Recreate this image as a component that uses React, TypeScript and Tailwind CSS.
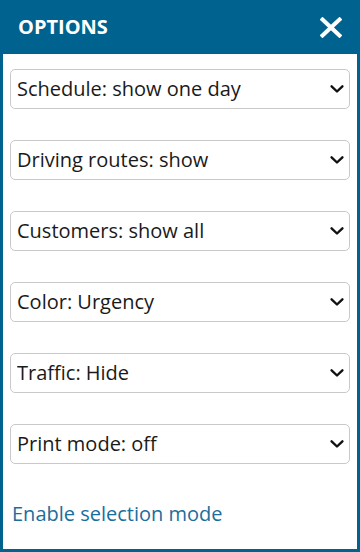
import React, { useState } from "react";

const options: { label: string; choices: string[] }[] = [
    { label: "Schedule", choices: ["show one day", "show one week"] },
    { label: "Driving routes", choices: ["show", "hide"] },
    { label: "Customers", choices: ["show all", "show selected"] },
    { label: "Color", choices: ["Urgency", "Driver"] },
    { label: "Traffic", choices: ["Hide", "Show"] },
    { label: "Print mode", choices: ["off", "on"] },
];

const Chevron: React.FC = () => (
    <svg
        className="pointer-events-none absolute right-[6px] top-1/2 -translate-y-1/2"
        width="14"
        height="9"
        viewBox="0 0 14 9"
        fill="none"
    >
        <path d="M1.6 1.8 L7 7 L12.4 1.8" stroke="#111" strokeWidth="2.4" strokeLinecap="round" strokeLinejoin="round" />
    </svg>
);

const OptionSelect: React.FC<{ label: string; choices: string[] }> = ({ label, choices }) => {
    const [value, setValue] = useState(choices[0]);
    return (
        <div className="relative">
            <select
                value={value}
                onChange={(e) => setValue(e.target.value)}
                className="h-[40px] w-full appearance-none rounded-[5px] border border-[#c9c9c9] bg-white pl-[6px] pr-8 text-[20px] text-[#1a1a1a] outline-none"
            >
                {choices.map((c) => (
                    <option key={c} value={c}>
                        {label}: {c}
                    </option>
                ))}
            </select>
            <Chevron />
        </div>
    );
};

const App: React.FC = () => {
    return (
        <div
            className="flex h-[552px] w-[360px] flex-col bg-[#00628e]"
            style={{ fontFamily: '"Open Sans", "Noto Sans", sans-serif' }}
        >
            {/* Header */}
            <div className="flex h-[54px] items-center justify-between pl-[18px] pr-[17px]">
                <h1 className="text-[20px] font-bold text-white">OPTIONS</h1>
                <button className="flex h-[24px] w-[24px] items-center justify-center">
                    <svg width="22" height="21" viewBox="0 0 22 21">
                        <path d="M2.5 2.5 L19.5 18.5 M19.5 2.5 L2.5 18.5" stroke="white" strokeWidth="4" strokeLinecap="square" />
                    </svg>
                </button>
            </div>

            {/* Body */}
            <div className="mx-[3px] mb-[3px] flex flex-1 flex-col bg-white px-[7px] pt-[15px]">
                <div className="flex flex-col gap-[31px]">
                    {options.map((o) => (
                        <OptionSelect key={o.label} label={o.label} choices={o.choices} />
                    ))}
                </div>
                <a href="#" className="mt-[38px] pl-[2px] text-[20px] leading-[24px] text-[#1a6e9c]">
                    Enable selection mode
                </a>
            </div>
        </div>
    );
};

export default App;
